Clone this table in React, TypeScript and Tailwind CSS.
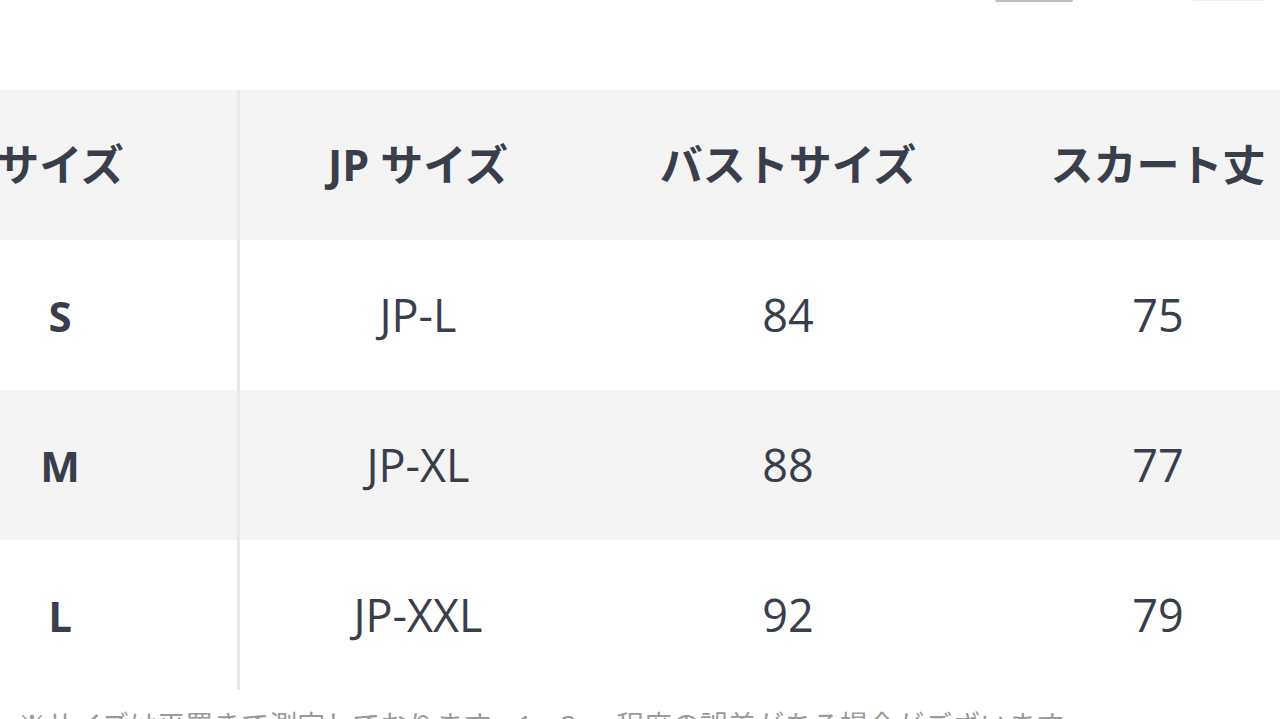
import React from 'react'

const rows = [
  { size: 'S', jp: 'JP-L', bust: '84', skirt: '75' },
  { size: 'M', jp: 'JP-XL', bust: '88', skirt: '77' },
  { size: 'L', jp: 'JP-XXL', bust: '92', skirt: '79' },
]

// column widths: first column partly scrolled off the left edge
const c1 = 'w-[357px] shrink-0 border-r-[3px] border-[#e9e9e9] flex items-center justify-center'
const c2 = 'w-[356px] shrink-0 flex items-center justify-center'
const c3 = 'w-[384px] shrink-0 flex items-center justify-center'
const c4 = 'w-[356px] shrink-0 flex items-center justify-center'

export default function App() {
  return (
    <div
      className="w-[1280px] h-[719px] overflow-hidden bg-white text-[#393e4a]"
      style={{ fontFamily: '"Open Sans", "Noto Sans CJK JP", sans-serif' }}
    >
      {/* bottom edges of buttons above the table */}
      <div className="flex h-[2px] justify-end">
        <div className="w-[78px] h-[2px] bg-[#bdbdbd] rounded-b-full" />
        <div className="w-[120px]" />
        <div className="w-[72px] h-[1px] bg-[#f0f0f0]" />
        <div className="w-[15px]" />
      </div>

      <div className="mt-[88px] -ml-[117px] flex flex-col">
        {/* header */}
        <div className="flex h-[150px] bg-[#f4f4f4] text-[43px] font-bold">
          <div className={c1}>サイズ</div>
          <div className={c2}>JP サイズ</div>
          <div className={c3}>バストサイズ</div>
          <div className={c4}>スカート丈</div>
        </div>

        {rows.map((r, i) => (
          <div key={r.size} className={`flex h-[150px] text-[45px] ${i === 1 ? 'bg-[#f4f4f4]' : 'bg-white'}`}>
            <div className={`${c1} font-bold text-[42px]`}>{r.size}</div>
            <div className={c2}>{r.jp}</div>
            <div className={c3}>{r.bust}</div>
            <div className={c4}>{r.skirt}</div>
          </div>
        ))}
      </div>

      <p className="mt-[21px] pl-[18px] text-[28px] leading-none text-[#9a9a9a] whitespace-nowrap">
        ※サイズは平置きで測定しております。1〜3cm程度の誤差がある場合がございます。
      </p>
    </div>
  )
}
